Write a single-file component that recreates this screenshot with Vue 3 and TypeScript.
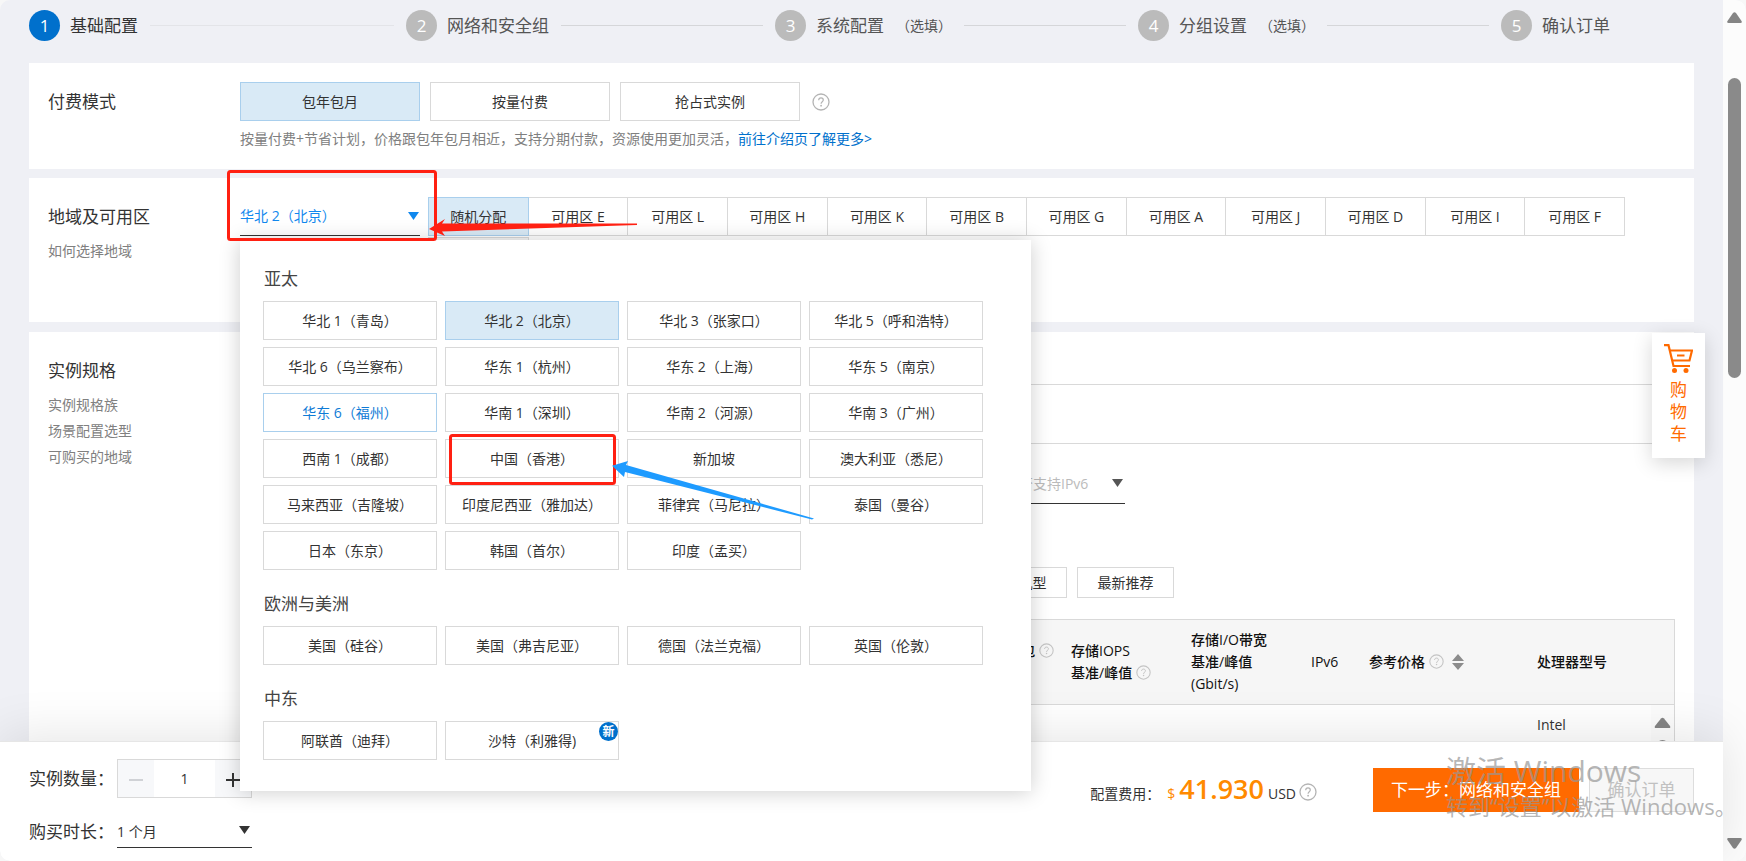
<script setup lang="ts">
import { ref } from 'vue'

interface Step { label: string; optional?: boolean }
interface RegionGroup { title: string; regions: string[] }

const steps: Step[] = [
  { label: '基础配置' },
  { label: '网络和安全组' },
  { label: '系统配置', optional: true },
  { label: '分组设置', optional: true },
  { label: '确认订单' },
]

const billingModes = ['包年包月', '按量付费', '抢占式实例']
const billing = ref('包年包月')

const zones = ['随机分配', ...'ELHKBGAJDIF'.split('').map((z) => `可用区 ${z}`)]
const zone = ref('随机分配')

const groups: RegionGroup[] = [
  {
    title: '亚太',
    regions: [
      '华北 1（青岛）', '华北 2（北京）', '华北 3（张家口）', '华北 5（呼和浩特）',
      '华北 6（乌兰察布）', '华东 1（杭州）', '华东 2（上海）', '华东 5（南京）',
      '华东 6（福州）', '华南 1（深圳）', '华南 2（河源）', '华南 3（广州）',
      '西南 1（成都）', '中国（香港）', '新加坡', '澳大利亚（悉尼）',
      '马来西亚（吉隆坡）', '印度尼西亚（雅加达）', '菲律宾（马尼拉）', '泰国（曼谷）',
      '日本（东京）', '韩国（首尔）', '印度（孟买）',
    ],
  },
  { title: '欧洲与美洲', regions: ['美国（硅谷）', '美国（弗吉尼亚）', '德国（法兰克福）', '英国（伦敦）'] },
  { title: '中东', regions: ['阿联酋（迪拜）', '沙特（利雅得)'] },
]
const region = ref('华北 2（北京）')
const hovered = '华东 6（福州）'
const newest = '沙特（利雅得)'

const count = ref(1)
</script>

<template>
  <div class="window">
    <svg width="0" height="0" class="defs" aria-hidden="true">
      <symbol id="help" viewBox="0 0 18 18">
        <circle cx="9" cy="9" r="8" fill="none" stroke="currentColor" stroke-width="1.3" />
        <path d="M6.7 7.2C6.7 5.7 7.7 4.9 9 4.9s2.3.8 2.3 2.1c0 1.7-2.2 1.7-2.2 3.7" fill="none" stroke="currentColor" stroke-width="1.2" />
        <circle cx="9.1" cy="12.7" r=".9" fill="currentColor" />
      </symbol>
      <symbol id="caret" viewBox="0 0 11 8">
        <path d="M0 0h11L5.5 8z" fill="currentColor" />
      </symbol>
    </svg>

    <div class="main">
      <ol class="steps">
        <li v-for="(s, i) in steps" :key="s.label" class="step" :class="{ active: i === 0 }">
          <span class="num">{{ i + 1 }}</span>
          <span class="step-label">{{ s.label }}</span>
          <span v-if="s.optional" class="optional">（选填）</span>
          <span v-if="i < steps.length - 1" class="line"></span>
        </li>
      </ol>

      <section class="card billing">
        <div class="side"><h2>付费模式</h2></div>
        <div class="body">
          <div class="modes">
            <button v-for="m in billingModes" :key="m" type="button" class="option" :class="{ selected: m === billing }" @click="billing = m">{{ m }}</button>
            <svg class="help large"><use href="#help" /></svg>
          </div>
          <p class="tip">按量付费+节省计划，价格跟包年包月相近，支持分期付款，资源使用更加灵活，<a href="#">前往介绍页了解更多&gt;</a></p>
        </div>
      </section>

      <section class="card area">
        <div class="side">
          <h2>地域及可用区</h2>
          <a href="#">如何选择地域</a>
        </div>
        <div class="body area-body">
          <div class="picker">
            <button type="button" class="trigger" aria-haspopup="listbox" aria-expanded="true">
              {{ region }}
              <svg class="caret"><use href="#caret" /></svg>
            </button>
            <div class="dropdown">
              <div v-for="g in groups" :key="g.title" class="group">
                <h3>{{ g.title }}</h3>
                <div class="regions">
                  <button v-for="r in g.regions" :key="r" type="button" class="option" :class="{ selected: r === region, hover: r === hovered }" @click="region = r">
                    {{ r }}<span v-if="r === newest" class="badge">新</span>
                  </button>
                </div>
              </div>
            </div>
          </div>
          <div class="zones">
            <button v-for="z in zones" :key="z" type="button" class="option" :class="{ selected: z === zone }" @click="zone = z">{{ z }}</button>
            <div class="zone-next"></div>
          </div>
        </div>
      </section>

      <section class="card spec">
        <div class="side">
          <h2>实例规格</h2>
          <a href="#">实例规格族</a>
          <a href="#">场景配置选型</a>
          <a href="#">可购买的地域</a>
        </div>
        <div class="body">
          <div class="rule first"></div>
          <div class="rule"></div>
          <div class="filters">
            <div class="select muted">
              <select aria-label="是否支持IPv6"><option>是否支持IPv6</option></select>
              <svg class="caret"><use href="#caret" /></svg>
            </div>
          </div>
          <div class="types">
            <button type="button" class="option">异构机型</button>
            <button type="button" class="option">最新推荐</button>
          </div>
          <div class="table-wrap">
            <table>
              <colgroup>
                <col /><col class="c-iops" /><col class="c-iops" /><col class="c-ip" /><col class="c-price" /><col class="c-cpu" />
              </colgroup>
              <thead>
                <tr>
                  <th class="right">网络收发包 <svg class="help"><use href="#help" /></svg><br />&nbsp;</th>
                  <th>存储IOPS<br />基准/峰值 <svg class="help"><use href="#help" /></svg></th>
                  <th>存储I/O带宽<br />基准/峰值<br />(Gbit/s)</th>
                  <th>IPv6</th>
                  <th>
                    参考价格 <svg class="help"><use href="#help" /></svg>
                    <svg class="sort" viewBox="0 0 12 16"><path d="M6 0l6 7H0zM6 16l6-7H0z" fill="#8c8c8c" /></svg>
                  </th>
                  <th>处理器型号</th>
                </tr>
              </thead>
              <tbody>
                <tr><td></td><td></td><td></td><td></td><td></td><td>Intel</td></tr>
              </tbody>
            </table>
            <svg class="inner-scroll" viewBox="0 0 23 60">
              <path d="M0 0h23v60H0z" fill="#fafafa" fill-opacity=".6" />
              <path d="M10 13.500q1.500-1.500 3 0L19 21q1 2-1 2H5q-2 0-1-2z" fill="#858585" />
              <rect x="5" y="35" width="13" height="40" rx="6.500" fill="#8a8a8a" />
            </svg>
          </div>
        </div>
      </section>

      <footer class="bar">
        <div class="settings">
          <label for="count">实例数量：</label>
          <div class="stepper">
            <button type="button" aria-label="减少" disabled><svg viewBox="0 0 14 14"><path d="M0 7h14" stroke="#d0d2d6" stroke-width="2" /></svg></button>
            <input id="count" v-model="count" type="text" />
            <button type="button" aria-label="增加" @click="count++"><svg viewBox="0 0 14 14"><path d="M0 7h14M7 0v14" stroke="#333" stroke-width="2" /></svg></button>
          </div>
          <label for="period">购买时长：</label>
          <div class="select period">
            <select id="period"><option>1 个月</option></select>
            <svg class="caret"><use href="#caret" /></svg>
          </div>
        </div>
        <div class="fee">
          <span>配置费用：</span><span class="dollar">$</span><strong>41.930</strong><span>USD</span>
          <svg class="help large"><use href="#help" /></svg>
        </div>
        <div class="actions">
          <button type="button" class="next">下一步：网络和安全组</button>
          <button type="button" class="confirm" disabled>确认订单</button>
        </div>
      </footer>

      <a href="#" class="cart">
        <svg viewBox="0 0 29 29" fill="none" stroke="#ff6a00">
          <path d="M0 1.200h4.500L9.500 22H26" stroke-width="2.200" />
          <path d="M5.500 6.500H28L25.500 16.500H8" stroke-width="2.200" />
          <path d="M13 11.500h7.500" stroke-width="2" />
          <circle cx="10.500" cy="26.500" r="2.500" fill="#ff6a00" stroke="none" />
          <circle cx="22" cy="26.500" r="2.500" fill="#ff6a00" stroke="none" />
        </svg>
        <span>购</span><span>物</span><span>车</span>
      </a>

      <svg class="marks" width="830" height="530" aria-hidden="true">
        <g fill="none" stroke="#ff2012" stroke-width="3">
          <rect x="228.500" y="171.500" width="207" height="68" rx="2" />
          <rect x="450.500" y="435.500" width="164" height="48" rx="2" />
        </g>
        <path d="M429 229L445 219L442 223.500L637 223.500V225L442 231.500L445 236z" fill="#ff2012" />
        <path d="M612 465.700L628 461L626 465L814 518.500L812 519.500L625 472L624 477z" fill="#1e9bff" />
      </svg>
    </div>

    <div class="scrollbar">
      <svg class="arrow" viewBox="0 0 15 11"><path d="M6 1q1.500-1.500 3 0l5.500 8q1 2-1 2h-12q-2 0-1-2z" fill="#858585" /></svg>
      <div class="thumb"></div>
      <svg class="arrow" viewBox="0 0 15 11"><path d="M6 10q1.500 1.500 3 0l5.500-8q1-2-1-2h-12q-2 0-1 2z" fill="#858585" /></svg>
    </div>

    <div class="watermark">
      <p class="wm-title">激活 Windows</p>
      <p>转到“设置”以激活 Windows。</p>
    </div>
  </div>
</template>

<style>
body { margin: 0; background: #f7f7f7; }
</style>

<style scoped>
.window {
  position: relative;
  display: flex;
  height: 100vh;
  overflow: hidden;
  border-radius: 10px;
  background: #eff0f5;
  color: #333;
  font: 14px/22px "Open Sans", "Noto Sans CJK SC", sans-serif;
}
.window *, .window *::before { box-sizing: border-box; }
.defs { position: absolute; }
h2, h3, p, ol { margin: 0; padding: 0; font-weight: 400; }
button, input, select { font: inherit; color: inherit; margin: 0; padding: 0; border-radius: 0; }
a { text-decoration: none; }

.main { position: relative; flex: 1; min-width: 0; padding: 0 29px; }

.steps {
  display: grid;
  grid-template-columns: 377fr 369fr 363fr 363fr 193fr;
  align-items: center;
  height: 63px;
  padding-bottom: 12px;
  list-style: none;
}
.step { display: flex; align-items: center; color: #555; font-size: 17px; white-space: nowrap; }
.num {
  flex: none;
  width: 31px;
  height: 31px;
  margin-right: 10px;
  border-radius: 50%;
  background: #bbb;
  color: #fff;
  line-height: 31px;
  text-align: center;
}
.optional { margin-left: 12px; font-size: 14px; }
.line { flex: 1; height: 1px; margin: 0 12px; background: #d5d6d9; }
.active { color: #333; }
.active .num { background: #0070cc; }
.active .line { background: #e3e4e8; }

.card { display: flex; padding: 19px 19px 0; background: #fff; }
.side { flex: none; display: flex; flex-direction: column; width: 192px; }
.side h2 { margin: 5px 0 6px; font-size: 17px; line-height: 30px; }
.side a { color: #808080; line-height: 26px; }
.body { flex: 1; min-width: 0; }
.billing { height: 106px; }
.area { height: 144px; margin-top: 9px; }
.spec { height: 560px; margin-top: 10px; padding-top: 0; }
.spec .side h2 { margin-top: 24px; }

.option {
  height: 39px;
  border: 1px solid #d9d9d9;
  background: #fff;
  color: #333;
  white-space: nowrap;
}
.option.selected { border-color: #a9cfed; background: #d9eaf6; }
.option.hover { border-color: #a9cfed; color: #0f7bd6; }

.modes { display: flex; align-items: center; gap: 10px; }
.modes .option { width: 180px; }
.help { width: 15px; height: 15px; color: #c4c4c4; vertical-align: -2px; }
.help.large { width: 18px; height: 18px; color: #b4b4b4; }
.modes .help { margin-left: 2px; }
.tip { margin-top: 7px; color: #808080; }
.tip a { color: #0070cc; }

.area-body { display: flex; gap: 8px; padding-right: 51px; }
.picker { position: relative; flex: none; width: 180px; }
.trigger {
  display: flex;
  align-items: center;
  justify-content: space-between;
  width: 180px;
  height: 39px;
  padding-right: 1px;
  border: 0;
  border-bottom: 1px solid #333;
  background: none;
  color: #1188ee;
}
.caret { width: 11px; height: 8px; }
.zones { flex: 1; display: grid; grid-template-columns: repeat(12, 1fr); row-gap: 1px; align-content: start; }
.zones .option { margin-right: -1px; }
.zones .selected { position: relative; }
.zone-next { height: 39px; margin-right: -1px; border: 1px solid #d9d9d9; background: #f5f5f5; }

.dropdown {
  position: absolute;
  z-index: 2;
  top: 43px;
  left: 0;
  width: 791px;
  padding: 24px 48px 31px 23px;
  background: #fff;
  box-shadow: 0 1px 20px rgba(0, 0, 0, .2);
}
.group + .group { margin-top: 19px; }
.group h3 { padding-left: 1px; margin-bottom: 7px; color: #444; font-size: 17px; line-height: 30px; }
.regions { display: grid; grid-template-columns: repeat(4, 1fr); gap: 7px 8px; }
.regions .option { position: relative; }
.badge {
  position: absolute;
  top: 0;
  right: 0;
  width: 19px;
  height: 19px;
  border-radius: 50%;
  background: #0070cc;
  color: #fff;
  font-size: 12px;
  font-weight: 700;
  line-height: 19px;
  text-align: center;
}

.rule { height: 59px; border-bottom: 1px solid #d9d9d9; }
.rule.first { height: 53px; }
.filters { padding: 21px 0 0 765px; }
.select { position: relative; width: 135px; border-bottom: 1px solid #333; }
.select select { width: 100%; height: 38px; border: 0; background: none; appearance: none; outline: 0; }
.select .caret { position: absolute; top: 14px; right: 2px; pointer-events: none; }
.muted { width: 120px; }
.muted select { color: #bbb; }
.muted .caret { color: #555; }
.types { display: flex; gap: 10px; margin: 63px 0 21px; padding-left: 730px; }
.types .option { width: 97px; height: 31px; }

.table-wrap { position: relative; border: 1px solid #d9d9d9; border-bottom: 0; }
table { width: 100%; table-layout: fixed; border-collapse: collapse; }
.c-iops { width: 120px; }
.c-ip { width: 58px; }
.c-price { width: 168px; }
.c-cpu { width: 147px; }
th {
  height: 84px;
  padding: 0 0 0 10px;
  border-bottom: 1px solid #d9d9d9;
  background: #f6f6f6;
  color: #111;
  font-weight: 500;
  text-align: left;
  vertical-align: middle;
  white-space: nowrap;
}
th.right { padding-right: 7px; text-align: right; }
.sort { width: 12px; height: 16px; margin-left: 8px; vertical-align: -3px; }
td { height: 84px; padding: 9px 10px; vertical-align: top; }
.inner-scroll { position: absolute; top: 85px; right: 0; width: 23px; height: 60px; }

.bar {
  position: absolute;
  z-index: 1;
  right: 0;
  bottom: 0;
  left: 0;
  display: flex;
  align-items: flex-start;
  padding: 17px 29px 13px;
  border-top: 1px solid #e6e6e6;
  background: #fff;
  box-shadow: 0 -6px 50px rgba(0, 0, 0, .1);
}
.settings { display: grid; grid-template-columns: 88px 135px; row-gap: 18px; align-items: center; }
.settings label { font-size: 17px; white-space: nowrap; }
.stepper { display: flex; width: 135px; height: 39px; border: 1px solid #d9d9d9; }
.stepper button { flex: none; width: 36px; border: 0; background: #f7f8fa; }
.stepper svg { width: 14px; height: 14px; vertical-align: middle; }
.stepper input { flex: 1; width: 0; border: 0; background: #fff; text-align: center; }
.period select { height: 31px; }
.period .caret { top: 10px; }
.fee { display: flex; align-items: baseline; margin: 15px 56px 0 auto; }
.fee .dollar { margin: 0 4px 0 7px; color: #ff8a00; }
.fee strong { margin-right: 4px; color: #ff8a00; font-size: 27px; font-weight: 600; line-height: 30px; }
.fee .help { align-self: center; margin: 5px 0 0 3px; }
.actions { display: flex; gap: 10px; margin-top: 9px; font-size: 17px; }
.actions button { height: 44px; }
.next { width: 206px; border: 0; background: #ff6a00; color: #fff; }
.confirm { width: 105px; border: 1px solid #ddd; background: #f7f7f7; color: #c1c1c1; }

.cart {
  position: absolute;
  z-index: 1;
  top: 333px;
  right: 18px;
  display: flex;
  flex-direction: column;
  align-items: center;
  width: 53px;
  padding: 11px 0 13px;
  background: #fff;
  box-shadow: 0 5px 20px rgba(0, 0, 0, .16);
  color: #ff6a00;
  font-size: 17px;
}
.cart svg { width: 29px; height: 29px; margin-bottom: 6px; }
.marks { position: absolute; z-index: 3; top: 0; left: 0; pointer-events: none; }

.scrollbar {
  flex: none;
  display: flex;
  flex-direction: column;
  align-items: center;
  width: 23px;
  padding: 12px 0;
  background: #fcfcfc;
}
.arrow { width: 15px; height: 11px; }
.thumb { width: 13px; height: 300px; margin: 55px 0 auto; border-radius: 7px; background: #8a8a8a; }

.watermark {
  position: absolute;
  z-index: 4;
  right: 12px;
  bottom: 42px;
  width: 288px;
  color: rgba(150, 150, 150, .7);
  font-size: 22px;
  line-height: 26px;
  white-space: nowrap;
  pointer-events: none;
}
.wm-title { margin-bottom: 4px; font-size: 30px; line-height: 36px; }
</style>
